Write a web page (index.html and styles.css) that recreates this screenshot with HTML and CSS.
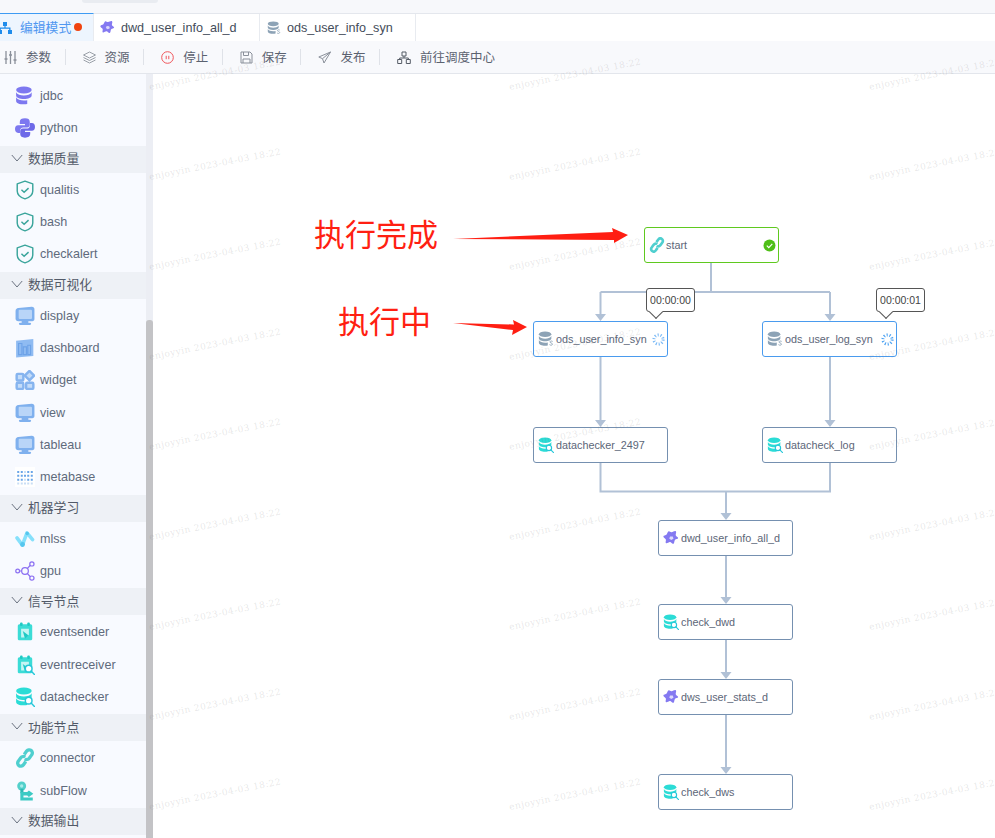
FILE: index.html
```html
<!DOCTYPE html>
<html lang="en">
  <head>
    <meta charset="UTF-8" />
    <meta name="viewport" content="width=device-width, initial-scale=1.0" />
    <title>工作流编辑</title>
    <link rel="stylesheet" href="styles.css">
  </head>
  <body>
    <svg class="defs" width="0" height="0">
      <defs>
        <symbol id="i-db" viewBox="0 0 18 18">
          <ellipse cx="8" cy="3.600" rx="7" ry="3.100" fill="currentColor"/>
          <path d="M1 5.700c1 2 3.900 2.900 7 2.900s6-.9 7-2.900v2.800c0 1.800-3.100 3.100-7 3.100s-7-1.300-7-3.100z" fill="currentColor"/>
          <path d="M1 10.200c1 2 3.900 2.900 7 2.900 1.100 0 2.100-.1 3-.3v3.400c-.9.200-1.900.300-3 .300-3.900 0-7-1.300-7-3.100z" fill="currentColor"/>
        </symbol>
        <symbol id="i-s" viewBox="0 0 18 18">
          <path d="M16.500 11.800c-.6-.6-2.600-.8-3 .3-.5 1.400 3.100 1.300 2.800 2.900-.3 1.300-2.500 1.200-3.400.3" fill="none" stroke="#8da3b6" stroke-width="1"/>
        </symbol>
        <symbol id="i-glass" viewBox="0 0 18 18">
          <circle cx="12.300" cy="12.300" r="3" fill="#fff" stroke="#25c7d9" stroke-width="1.300"/>
          <path d="M14.500 14.500l3 3" stroke="#25c7d9" stroke-width="1.300" stroke-linecap="round"/>
        </symbol>
        <symbol id="i-star" viewBox="0 0 18 18">
          <path d="M6 1.800c1.300-.9 2.200.9 3.700.7 1.500-.2 3.600-2 4.700-1s-.3 3-.1 4.400c.2 1.300 2.700 2 2.700 3.200 0 1.300-2.700 1.100-3.600 2.100-.9 1-.4 3.800-1.700 4.400-1.200.5-2.500-1.800-3.800-2-1.400-.2-3.400 2-4.500 1.300-1.100-.7.300-2.900-.2-4.200C2.700 9.400.3 8.700.4 7.400c.1-1.300 2.800-1.300 3.700-2.300C4.900 4.200 4.800 2.700 6 1.800z" fill="#8479f1"/>
          <path d="M8 7.200l3 .2.800 2.500-2.600 1.300L7 9.500z" fill="#dcd9fb"/>
        </symbol>
        <symbol id="i-shield" viewBox="0 0 18 18">
          <path d="M9 1l7 2.500v6.300c0 3.400-3.200 5.900-7 7.200-3.800-1.300-7-3.800-7-7.200V3.500z" fill="none" stroke="#3ba59c" stroke-width="1.300" stroke-linejoin="round"/>
          <path d="M5.800 8.800l2.400 2.300 4-3.800" fill="none" stroke="#3ba59c" stroke-width="1.300"/>
        </symbol>
        <symbol id="i-monitor" viewBox="0 0 18 18">
          <rect x="6" y="13" width="6" height="3" fill="#7fb0ee"/>
          <rect x="3.500" y="15" width="11" height="2" rx="1" fill="#7fb0ee"/>
          <path d="M.5 4.500C.5 3 1.500 2 3 1.800L15 .6c1.500-.1 2.500.8 2.500 2.200v9c0 1.200-.8 1.900-1.900 1.900H3c-1.500 0-2.500-.9-2.500-2.200z" fill="#7fb0ee"/>
          <rect x="3.300" y="3.300" width="12" height="8.500" rx="1" fill="#b9d5f8"/>
        </symbol>
        <symbol id="i-dash" viewBox="0 0 18 18">
          <path d="M1 2.500L16.500 .8v15.500L1 17.500z" fill="#8fbbf2"/>
          <path d="M3.200 15V5h3v10zM7.500 15V8h2.800v7zM11.500 15V6.500H14V15z" fill="none" stroke="#6ea3e8" stroke-width="1"/>
        </symbol>
        <symbol id="i-widget" viewBox="0 0 18 18">
          <rect x="1.500" y="3.500" width="6" height="6" rx="1" fill="#c4dcf9" stroke="#86b4ef" stroke-width="2.200"/>
          <path d="M13 .8l4.200 4.200-4.200 4.200L8.800 5z" fill="#c4dcf9" stroke="#86b4ef" stroke-width="2.200"/>
          <rect x="1.500" y="11.500" width="6" height="5.500" rx="1" fill="#c4dcf9" stroke="#86b4ef" stroke-width="2.200"/>
          <rect x="10" y="11.500" width="6.500" height="5.500" rx="1" fill="#c4dcf9" stroke="#86b4ef" stroke-width="2.200"/>
        </symbol>
        <symbol id="i-meta" viewBox="0 0 18 18">
          <rect width="18" height="18" fill="#fff"/>
          <path d="M2 3.500h1.800v1.800H2zM5.200 3.500H7v1.800H5.200zM11 3.500h1.800v1.800H11zM14.200 3.500H16v1.800h-1.800zM2 7h1.800v1.800H2zM5.200 7H7v1.800H5.200zM8.100 7h1.800v1.800H8.100zM11 7h1.800v1.800H11zM14.200 7H16v1.800h-1.800zM2 10.500h1.800v1.800H2zM5.200 10.500H7v1.800H5.200zM11 10.500h1.800v1.800H11zM14.200 10.500H16v1.800h-1.800z" fill="#6aa5e8"/>
          <path d="M8.100 3.500h1.800v1.800H8.100zM8.100 10.500h1.800v1.800H8.100zM2 14h1.800v1.800H2zM5.200 14H7v1.800H5.200zM8.100 14h1.800v1.800H8.100zM11 14h1.800v1.800H11zM14.200 14H16v1.800h-1.800z" fill="#c9def5"/>
        </symbol>
        <symbol id="i-mlss" viewBox="0 0 18 18">
          <path d="M1.800 8l4.800 6.500 4.200-11 5 6" fill="none" stroke="#86e0fb" stroke-width="3.200" stroke-linecap="round" stroke-linejoin="round"/>
          <circle cx="6.800" cy="14" r="2.200" fill="#56c6ee"/>
          <circle cx="11" cy="4" r="1.600" fill="#56c6ee"/>
        </symbol>
        <symbol id="i-gpu" viewBox="0 0 18 18">
          <g fill="none" stroke="#8b6ff2" stroke-width="1.100">
            <circle cx="2.400" cy="9" r="1.700"/><circle cx="15.200" cy="2.600" r="1.900"/><circle cx="15.200" cy="15.400" r="1.900"/><circle cx="9" cy="9" r="3"/>
            <path d="M4.100 9H6M11 6.800l2.800-3M11 11.200l2.800 3"/>
          </g>
        </symbol>
        <symbol id="i-event" viewBox="0 0 18 18">
          <path d="M2.500 3.500c0-1 .8-1.500 1.700-1.500h9.600c.9 0 1.700.5 1.700 1.500V15c0 1-.8 1.500-1.700 1.500H4.200c-.9 0-1.700-.5-1.700-1.500z" fill="#3bdcd6"/>
          <rect x="4.500" y=".5" width="2.400" height="3.200" rx="1" fill="#1fc9c4"/><rect x="11" y=".5" width="2.400" height="3.200" rx="1" fill="#1fc9c4"/>
          <path d="M5.500 6h7v5.500l-3.500 2.500H5.500z" fill="#c5f5f3"/>
          <path d="M7 8l5 4-3 3z" fill="#1fc9c4"/>
        </symbol>
        <symbol id="i-link" viewBox="0 0 18 18">
          <g fill="none" stroke="#4fcfcf" stroke-width="3">
            <path d="M8.300 5.800l2.200-3c1-1.300 2.800-1.500 4-.6s1.500 2.700.5 4l-2.200 3c-1 1.300-2.800 1.500-4 .6"/>
            <path d="M9.700 12.200l-2.200 3c-1 1.300-2.800 1.500-4 .6s-1.500-2.700-.5-4l2.200-3c1-1.300 2.800-1.500 4-.6"/>
          </g>
        </symbol>
        <symbol id="i-flow" viewBox="0 0 18 18">
          <circle cx="6" cy="4.500" r="4" fill="#53d0cb"/>
          <circle cx="6" cy="4.500" r="1.500" fill="#a8ebe8"/>
          <path d="M4.800 7h2.800v4H4.800z" fill="#2fb9b4"/>
          <path d="M4.800 10h6.200l1.500-1.500 4 3-4 3-1.500-1.500H7.600v1.800H16v2.700H4.800z" fill="#3ccac4"/>
        </symbol>
        <symbol id="i-py" viewBox="0 0 18 18">
          <path d="M9 .3c-3 0-4.700 1-4.700 3.200v2H9v1H2.800C1 6.500 0 8 0 10s1 3.500 2.800 3.500h1.700v-2.200c0-1.600 1.300-2.800 2.800-2.800h3.700c1.300 0 2.300-1 2.300-2.300V3.500c0-2.200-1.500-3.200-4.300-3.200z" fill="#7d78f0"/>
          <path d="M9 17.700c3 0 4.700-1 4.700-3.200v-2H9v-1h6.200C17 11.500 18 10 18 8s-1-3.500-2.800-3.500h-1.700v2.200c0 1.600-1.300 2.800-2.800 2.800H7c-1.300 0-2.300 1-2.300 2.300v2.700c0 2.200 1.500 3.200 4.300 3.200z" fill="#6e69e8"/>
        </symbol>
        <symbol id="i-chev" viewBox="0 0 12 12">
          <path d="M.8 3l5.200 6 5.200-6" fill="none" stroke="#6b7380" stroke-width="1"/>
        </symbol>
      </defs>
    </svg>

    <div class="topstrip"><div class="pill"></div></div>

    <div class="tabs">
      <div class="tab tab-active">
        <svg class="tab-flow" width="14" height="14" viewBox="0 0 14 14"><path d="M5 1h4v4H7.600v1.500H12.500V9H14v4h-4V9h1.200V7.800H2.800V9H4v4H0V9h1.500V6.500h4.900V5H5z" fill="#1f8ceb"/></svg>
        <span>编辑模式</span>
        <i class="dot"></i>
      </div>
      <div class="tab tab-dwd">
        <svg width="15" height="15"><use href="#i-star"/></svg>
        <span>dwd_user_info_all_d</span>
      </div>
      <div class="tab tab-ods">
        <svg class="c-grey" width="14" height="14"><use href="#i-db"/><use href="#i-s"/></svg>
        <span>ods_user_info_syn</span>
      </div>
    </div>

    <div class="toolbar">
      <div class="tool tool-first">
        <svg width="13" height="13" viewBox="0 0 13 13"><path d="M2 0v13M6.500 0v13M11 0v13M.5 8h3M5 4h3M9.500 9h3" fill="none" stroke="#8a909a" stroke-width="1.300"/></svg>
        <span>参数</span>
      </div>
      <div class="tool">
        <svg width="13" height="13" viewBox="0 0 13 13"><path d="M6.500 1L12.500 4 6.500 7 .5 4zM.5 6.500l6 3 6-3M.5 9l6 3 6-3" fill="none" stroke="#9aa0a8" stroke-width="1"/></svg>
        <span>资源</span>
      </div>
      <div class="tool">
        <svg width="13" height="13" viewBox="0 0 13 13"><circle cx="6.500" cy="6.500" r="5.800" fill="none" stroke="#f0555a" stroke-width="1"/><path d="M5.200 4.800v3.400M7.800 4.800v3.400" stroke="#f0555a" stroke-width="1"/></svg>
        <span>停止</span>
      </div>
      <div class="tool">
        <svg width="13" height="13" viewBox="0 0 13 13"><path d="M1 1h9l2 2v9H1zM3.500 1v3.500h5V1M3 12V8h7v4" fill="none" stroke="#8a909a" stroke-width="1"/></svg>
        <span>保存</span>
      </div>
      <div class="tool">
        <svg width="13" height="13" viewBox="0 0 13 13"><path d="M12.500 1L.8 6l3.700 1.700L6 12zM4.500 7.700L12.500 1" fill="none" stroke="#8a909a" stroke-width="1"/></svg>
        <span>发布</span>
      </div>
      <div class="tool tool-last">
        <svg width="14" height="13" viewBox="0 0 14 13"><path d="M5 1h4v4H5zM.7 8.500h4v4h-4zM9.300 8.500h4v4h-4zM7 5v2H2.700v1.500M7 7h4.300v1.500" fill="none" stroke="#555c66" stroke-width="1"/></svg>
        <span>前往调度中心</span>
      </div>
    </div>

    <div class="main">
      <div class="side">
        <div class="side-list">
          <div class="item"><svg class="c-purple"><use href="#i-db"/></svg><span>jdbc</span></div>
          <div class="item"><svg><use href="#i-py"/></svg><span>python</span></div>
          <div class="group"><svg><use href="#i-chev"/></svg><span>数据质量</span></div>
          <div class="item"><svg><use href="#i-shield"/></svg><span>qualitis</span></div>
          <div class="item"><svg><use href="#i-shield"/></svg><span>bash</span></div>
          <div class="item"><svg><use href="#i-shield"/></svg><span>checkalert</span></div>
          <div class="group"><svg><use href="#i-chev"/></svg><span>数据可视化</span></div>
          <div class="item"><svg><use href="#i-monitor"/></svg><span>display</span></div>
          <div class="item"><svg><use href="#i-dash"/></svg><span>dashboard</span></div>
          <div class="item"><svg><use href="#i-widget"/></svg><span>widget</span></div>
          <div class="item"><svg><use href="#i-monitor"/></svg><span>view</span></div>
          <div class="item"><svg><use href="#i-monitor"/></svg><span>tableau</span></div>
          <div class="item"><svg><use href="#i-meta"/></svg><span>metabase</span></div>
          <div class="group"><svg><use href="#i-chev"/></svg><span>机器学习</span></div>
          <div class="item"><svg><use href="#i-mlss"/></svg><span>mlss</span></div>
          <div class="item"><svg><use href="#i-gpu"/></svg><span>gpu</span></div>
          <div class="group"><svg><use href="#i-chev"/></svg><span>信号节点</span></div>
          <div class="item"><svg><use href="#i-event"/></svg><span>eventsender</span></div>
          <div class="item"><svg><use href="#i-event"/><use href="#i-glass"/></svg><span>eventreceiver</span></div>
          <div class="item"><svg class="c-cyan"><use href="#i-db"/><use href="#i-glass"/></svg><span>datachecker</span></div>
          <div class="group"><svg><use href="#i-chev"/></svg><span>功能节点</span></div>
          <div class="item"><svg><use href="#i-link"/></svg><span>connector</span></div>
          <div class="item"><svg><use href="#i-flow"/></svg><span>subFlow</span></div>
          <div class="group"><svg><use href="#i-chev"/></svg><span>数据输出</span></div>
        </div>
        <div class="scroll"><div class="thumb"></div></div>
      </div>

      <div class="canvas">
        <svg class="edges" width="842" height="764" viewBox="153 74 842 764">
          <g fill="none" stroke="#b1c1d6" stroke-width="2">
            <path d="M711 263V292M600.500 292H830M600.500 292V316M830 292V316"/>
            <path d="M600.500 357V422M830 357V422"/>
            <path d="M600.500 463V491.500H830V463M726 491.500V515"/>
            <path d="M726 556V599M726 640V674M726 715V769"/>
          </g>
          <g fill="#b1c1d6">
            <path d="M595 314h11l-5.500 7zM824.500 314h11l-5.500 7z"/>
            <path d="M595 420h11l-5.500 7zM824.500 420h11l-5.500 7z"/>
            <path d="M720.500 513h11l-5.500 7zM720.500 597h11l-5.500 7zM720.500 672h11l-5.500 7zM720.500 767h11l-5.500 7z"/>
          </g>
          <g fill="#ff1e12">
            <path d="M453 239L613 232 612 228 628 235 614 243 614 240z"/>
            <path d="M453 323L514 324.500 513 320 527 327 512 335 513 330z"/>
          </g>
        </svg>

        <div class="note note-done">执行完成</div>
        <div class="note note-run">执行中</div>

        <div class="node node-ok n-start">
          <svg width="16" height="16"><use href="#i-link"/></svg><span>start</span>
          <svg class="status" width="13" height="13" viewBox="0 0 13 13"><circle cx="6.500" cy="6.500" r="6" fill="#4fbf17"/><path d="M3.800 6.600l2 2 3.500-3.700" fill="none" stroke="#fff" stroke-width="1.200"/></svg>
        </div>

        <div class="timer t-a">00:00:00</div>
        <div class="timer t-b">00:00:01</div>

        <div class="node node-run n-info">
          <svg class="c-grey" width="16" height="16"><use href="#i-db"/><use href="#i-s"/></svg><span>ods_user_info_syn</span>
          <svg class="status" width="13" height="13" viewBox="0 0 13 13"><circle cx="6.500" cy="6.500" r="4.600" fill="none" stroke="#7cbaf6" stroke-width="3" stroke-dasharray="1.100 1.790"/></svg>
        </div>
        <div class="node node-run n-log">
          <svg class="c-grey" width="16" height="16"><use href="#i-db"/><use href="#i-s"/></svg><span>ods_user_log_syn</span>
          <svg class="status" width="13" height="13" viewBox="0 0 13 13"><circle cx="6.500" cy="6.500" r="4.600" fill="none" stroke="#4ea3f2" stroke-width="3" stroke-dasharray="1.100 1.790"/></svg>
        </div>

        <div class="node n-dc"><svg class="c-cyan" width="16" height="16"><use href="#i-db"/><use href="#i-glass"/></svg><span>datachecker_2497</span></div>
        <div class="node n-dl"><svg class="c-cyan" width="16" height="16"><use href="#i-db"/><use href="#i-glass"/></svg><span>datacheck_log</span></div>
        <div class="node n-dwd"><svg width="16" height="16"><use href="#i-star"/></svg><span>dwd_user_info_all_d</span></div>
        <div class="node n-cdwd"><svg class="c-cyan" width="16" height="16"><use href="#i-db"/><use href="#i-glass"/></svg><span>check_dwd</span></div>
        <div class="node n-dws"><svg width="16" height="16"><use href="#i-star"/></svg><span>dws_user_stats_d</span></div>
        <div class="node n-cdws"><svg class="c-cyan" width="16" height="16"><use href="#i-db"/><use href="#i-glass"/></svg><span>check_dws</span></div>
      </div>
    </div>

    <div class="marks-big">
      <span>xinyunzhou 2023-04-03</span><span>xinyunzhou 2023-04-03</span><span>xinyunzhou 2023-04-03</span>
      <span>xinyunzhou 2023-04-03</span><span>xinyunzhou 2023-04-03</span><span>xinyunzhou 2023-04-03</span>
      <span>xinyunzhou 2023-04-03</span><span>xinyunzhou 2023-04-03</span><span>xinyunzhou 2023-04-03</span>
      <span>xinyunzhou 2023-04-03</span><span>xinyunzhou 2023-04-03</span><span>xinyunzhou 2023-04-03</span>
      <span>xinyunzhou 2023-04-03</span><span>xinyunzhou 2023-04-03</span><span>xinyunzhou 2023-04-03</span>
    </div>

    <div class="marks">
      <span>enjoyyin 2023-04-03 18:22</span><span>enjoyyin 2023-04-03 18:22</span><span>enjoyyin 2023-04-03 18:22</span>
      <span>enjoyyin 2023-04-03 18:22</span><span>enjoyyin 2023-04-03 18:22</span><span>enjoyyin 2023-04-03 18:22</span>
      <span>enjoyyin 2023-04-03 18:22</span><span>enjoyyin 2023-04-03 18:22</span><span>enjoyyin 2023-04-03 18:22</span>
      <span>enjoyyin 2023-04-03 18:22</span><span>enjoyyin 2023-04-03 18:22</span><span>enjoyyin 2023-04-03 18:22</span>
      <span>enjoyyin 2023-04-03 18:22</span><span>enjoyyin 2023-04-03 18:22</span><span>enjoyyin 2023-04-03 18:22</span>
      <span>enjoyyin 2023-04-03 18:22</span><span>enjoyyin 2023-04-03 18:22</span><span>enjoyyin 2023-04-03 18:22</span>
      <span>enjoyyin 2023-04-03 18:22</span><span>enjoyyin 2023-04-03 18:22</span><span>enjoyyin 2023-04-03 18:22</span>
      <span>enjoyyin 2023-04-03 18:22</span><span>enjoyyin 2023-04-03 18:22</span><span>enjoyyin 2023-04-03 18:22</span>
      <span>enjoyyin 2023-04-03 18:22</span><span>enjoyyin 2023-04-03 18:22</span><span>enjoyyin 2023-04-03 18:22</span>
    </div>
  </body>
</html>
```
FILE: styles.css
```css
html,
body {
  height: 838px;
  overflow: hidden;
}
body {
  position: relative;
  margin: 0;
  font-family: "Liberation Sans", "Noto Sans CJK SC", sans-serif;
  color: #5b6577;
  background-color: #fff;
}
.defs {
  position: absolute;
}
.c-grey {
  color: #8da3b6;
}
.c-purple {
  color: #7d78f0;
}
.c-cyan {
  color: #2bdcd6;
}

.topstrip {
  height: 13px;
  padding-left: 82px;
  background-color: #f7f8fb;
}
.pill {
  width: 76px;
  height: 3px;
  background-color: #e9ecf1;
  border-radius: 0 0 6px 6px;
}

.tabs {
  display: flex;
  height: 27px;
  border-top: 1px solid #e4e7ed;
  background-color: #fff;
}
.tab {
  display: flex;
  align-items: center;
  box-sizing: border-box;
  height: 27px;
  font-size: 12.600px;
  color: #444c5a;
  border-right: 1px solid #e8ebf0;
}
.tab-active {
  width: 94px;
  margin-top: -1px;
  height: 28px;
  padding-bottom: 2px;
  font-size: 12.800px;
  color: #4f97f0;
  background-color: #edf5fe;
  border-top: 1px solid #3d9bf3;
}
.tab-flow {
  flex: none;
  margin: 2px 0 0 -2px;
}
.tab-active span {
  margin-left: 8px;
}
.dot {
  width: 8px;
  height: 8px;
  margin: 1px 0 0 3px;
  border-radius: 50%;
  background-color: #f0430f;
}
.tab-dwd {
  width: 166px;
  padding-left: 6px;
}
.tab-dwd span {
  margin-left: 6px;
}
.tab-ods {
  width: 156px;
  padding-left: 7px;
}
.tab-ods span {
  margin-left: 6px;
}

.toolbar {
  display: flex;
  align-items: center;
  box-sizing: border-box;
  height: 33px;
  background-color: #f8f9fc;
  border-bottom: 1px solid #e3e6ec;
  font-size: 12.500px;
  color: #5b6270;
}
.tool {
  display: flex;
  align-items: center;
  gap: 9px;
  height: 16px;
  padding: 0 13.600px 0 17px;
  border-right: 1px solid #dfe2e8;
}
.tool span {
  margin-top: -2px;
}
.tool-first {
  padding-left: 4px;
}
.tool-last {
  border-right: none;
}

.main {
  display: flex;
  height: 764px;
}
.side {
  flex: none;
  display: flex;
  width: 153px;
  background-color: #f8faff;
}
.side-list {
  width: 146px;
  padding-top: 6px;
  font-size: 12.600px;
  color: #5f6a7c;
}
.item {
  display: flex;
  align-items: center;
  height: 32.330px;
  padding-left: 15px;
}
.item svg {
  flex: none;
  width: 20px;
  height: 20px;
  margin-right: 5px;
}
.group {
  display: flex;
  align-items: center;
  box-sizing: border-box;
  height: 27px;
  margin: 1px 0;
  padding: 0 0 3px 11px;
  font-size: 12.800px;
  color: #525a68;
  background-color: #eef1f6;
}
.group svg {
  flex: none;
  width: 12px;
  height: 12px;
  margin-right: 5px;
}
.scroll {
  width: 7px;
  padding-top: 246px;
  background-color: #eceef4;
}
.thumb {
  height: 518px;
  background-color: #c3c3c6;
  border-radius: 3px 3px 0 0;
}

.canvas {
  position: relative;
  flex: 1;
  background-color: #fff;
}
.edges {
  position: absolute;
  left: 0;
  top: 0;
}
.note {
  position: absolute;
  font-size: 31px;
  line-height: 36px;
  color: #ff1f12;
}
.note-done {
  left: 161px;
  top: 144px;
}
.note-run {
  left: 185px;
  top: 231px;
}

.node {
  position: absolute;
  display: flex;
  align-items: center;
  box-sizing: border-box;
  width: 135px;
  height: 36px;
  padding-left: 4px;
  font-size: 10.800px;
  color: #5c6678;
  background-color: rgba(255, 255, 255, 0.6);
  border: 1px solid #7590b0;
  border-radius: 3px;
}
.node > svg:first-child {
  flex: none;
  margin-right: 2px;
}
.node-ok {
  border-color: #5fc91f;
}
.node-ok > svg:first-child {
  margin-right: 1px;
}
.node-run {
  border-color: #4a9bee;
}
.status {
  margin-left: auto;
  margin-right: 2px;
}
.n-start { left: 491px; top: 153px; }
.n-info { left: 380px; top: 247px; }
.n-log { left: 609px; top: 247px; }
.n-dc { left: 380px; top: 353px; }
.n-dl { left: 609px; top: 353px; }
.n-dwd { left: 505px; top: 446px; }
.n-cdwd { left: 505px; top: 530px; }
.n-dws { left: 505px; top: 605px; }
.n-cdws { left: 505px; top: 700px; }

.timer {
  position: absolute;
  box-sizing: border-box;
  width: 49px;
  height: 24px;
  font-size: 10.500px;
  line-height: 22px;
  text-align: center;
  color: #444;
  background-color: #fff;
  border: 1px solid #555;
  border-radius: 3px;
}
.timer::after {
  content: "";
  position: absolute;
  left: 4px;
  bottom: -6px;
  width: 9px;
  height: 9px;
  background-color: #fff;
  border-right: 1px solid #555;
  border-bottom: 1px solid #555;
  transform: rotate(45deg);
}
.t-a { left: 493px; top: 214px; }
.t-b { left: 723px; top: 214px; }

.marks-big {
  position: absolute;
  left: 88px;
  top: 154px;
  display: grid;
  grid-template-columns: repeat(3, 305px);
  grid-auto-rows: 143px;
  pointer-events: none;
}
.marks-big span {
  height: 36px;
  font-family: "Liberation Sans", sans-serif;
  font-size: 21px;
  line-height: 36px;
  letter-spacing: 0.500px;
  white-space: nowrap;
  color: rgba(0, 0, 0, 0.025);
}
.marks {
  position: absolute;
  left: 148px;
  top: 29px;
  width: 847px;
  display: grid;
  grid-template-columns: repeat(3, 360px);
  grid-auto-rows: 90px;
  overflow: hidden;
  pointer-events: none;
}
.marks span {
  align-self: center;
  justify-self: start;
  width: 136px;
  font-family: "DejaVu Serif", serif;
  font-size: 9px;
  letter-spacing: 0.500px;
  white-space: nowrap;
  color: rgba(120, 120, 120, 0.18);
  transform: rotate(-11deg);
}
```
